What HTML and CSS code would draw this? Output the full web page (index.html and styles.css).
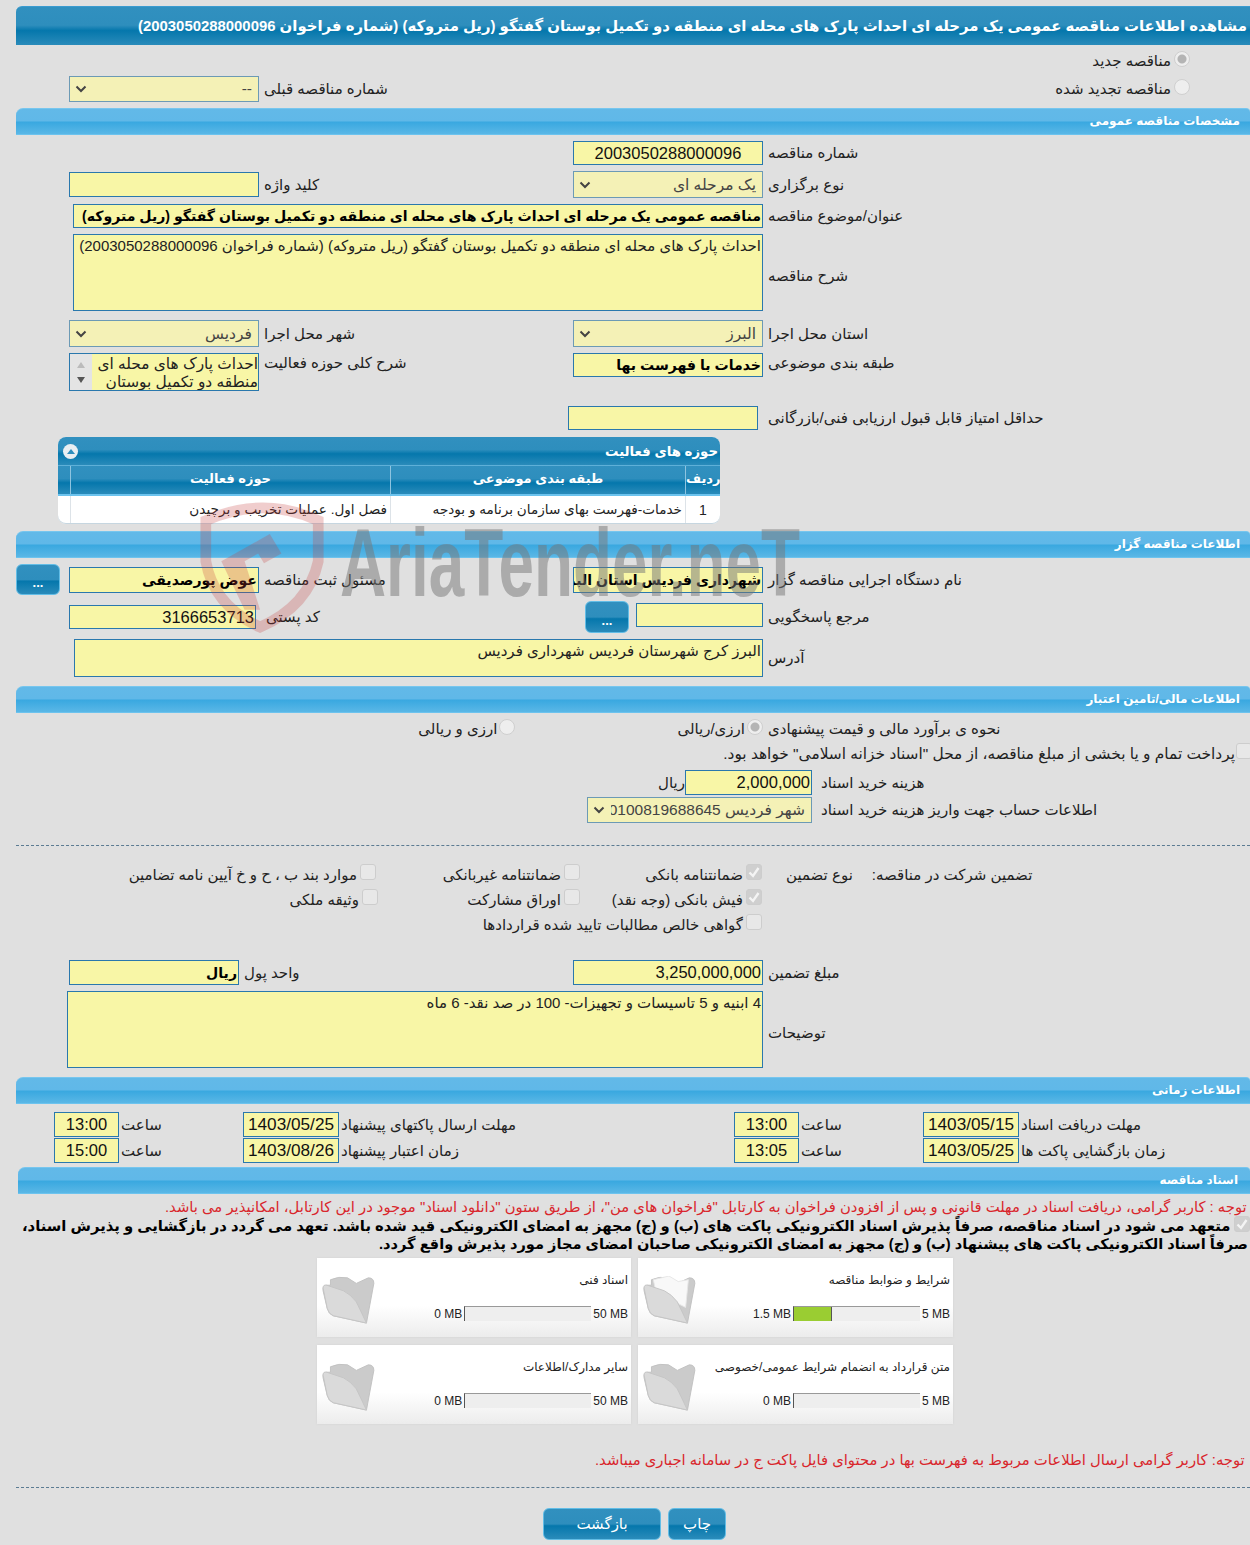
FILE: index.html
```html
<!DOCTYPE html>
<html lang="fa">
<head>
    <meta charset="UTF-8">
    <title>مشاهده اطلاعات مناقصه</title>
    <link rel="stylesheet" href="styles.css">
</head>
<body>
    <svg class="defs" width="0" height="0">
        <symbol id="folder" viewBox="0 0 56 52">
            <path d="M9 4 Q18 0 27.5 2 L37 8 L50 2 Q56 2 56 8 L48 51 L11.5 43 Q7 41 5.5 35 L1 16 Q0 10 5 10 L9 10 Z" fill="#cbcbcb" stroke="#c0c0c0"/>
            <path d="M1 13 Q1 9 5 10 L23 16 Q31 20 37 28 L48 51 L12 43 Q7 41 5.5 35 Z" fill="#dadada" stroke="#c4c4c4"/>
        </symbol>
        <symbol id="folder-full" viewBox="0 0 56 52">
            <path d="M9 4 Q18 0 27.5 2 L37 8 L50 2 Q56 2 56 8 L48 51 L11.5 43 Q7 41 5.5 35 L1 16 Q0 10 5 10 L9 10 Z" fill="#cbcbcb" stroke="#c0c0c0"/>
            <path d="M11 4 L28 0 L38 6 L49 4 L46 34 L14 18 Z" fill="#f8f8f8" stroke="#e6e6e6"/>
            <path d="M1 13 Q1 9 5 10 L23 16 Q31 20 37 28 L48 51 L12 43 Q7 41 5.5 35 Z" fill="#dadada" stroke="#c4c4c4"/>
        </symbol>
        <symbol id="chevron" viewBox="0 0 12 8">
            <path d="M1.5 1.5 L6 6 L10.5 1.5" fill="none" stroke="#444" stroke-width="2"/>
        </symbol>
        <symbol id="tick" viewBox="0 0 14 14">
            <path d="M2.5 7.5 L6 11 L11.5 3" fill="none" stroke="#f4f4f4" stroke-width="2.4"/>
        </symbol>
    </svg>

    <!-- watermark over the form -->
    <div class="watermark">
        <svg class="wm-shield" viewBox="0 0 130 140">
            <path d="M6 20 Q65 -6 122 20 L122 62 Q112 108 62 130 Q14 108 6 62 Z" fill="none" stroke="#c83c3c" stroke-width="11"/>
            <path d="M22 62 L72 34 L84 54 L66 64 L60 54 L46 62 L62 112 L46 112 Z" fill="#c83c3c"/>
        </svg>
        <span class="wm-text">AriaTender.neT</span>
    </div>

    <div class="title-bar"><h1>مشاهده اطلاعات مناقصه عمومی یک مرحله ای احداث پارک های محله ای منطقه دو تکمیل بوستان گفتگو (ریل متروکه) (شماره فراخوان 2003050288000096)</h1></div>

    <div class="row h26 mt3">
        <div class="radio-cell"><span class="radio on"></span><span>مناقصه جدید</span></div>
    </div>
    <div class="row h28 mt1">
        <div class="field select col2 h26"><svg class="chev"><use href="#chevron"/></svg><span>--</span></div>
        <label class="col3">شماره مناقصه قبلی</label>
        <div class="radio-cell"><span class="radio"></span><span>مناقصه تجدید شده</span></div>
    </div>

    <div class="band mt5">مشخصات مناقصه عمومی</div>

    <div class="row h24 mt6">
        <div class="field num col4 centered">2003050288000096</div>
        <label class="col5">شماره مناقصه</label>
    </div>
    <div class="row h27 mt6">
        <div class="field col2 h25">&nbsp;</div>
        <label class="col3">کلید واژه</label>
        <div class="field select col4"><svg class="chev"><use href="#chevron"/></svg><span>یک مرحله ای</span></div>
        <label class="col5">نوع برگزاری</label>
    </div>
    <div class="row h24 mt6">
        <div class="field strong wide">مناقصه عمومی یک مرحله ای احداث پارک های محله ای منطقه دو تکمیل بوستان گفتگو (ریل متروکه)</div>
        <label class="col5">عنوان/موضوع مناقصه</label>
    </div>
    <div class="row h77 mt6">
        <div class="field area wide">احداث پارک های محله ای منطقه دو تکمیل بوستان گفتگو (ریل متروکه) (شماره فراخوان 2003050288000096)</div>
        <label class="col5 low">شرح مناقصه</label>
    </div>
    <div class="row h27 mt9">
        <div class="field select col2"><svg class="chev"><use href="#chevron"/></svg><span>فردیس</span></div>
        <label class="col3">شهر محل اجرا</label>
        <div class="field select col4"><svg class="chev"><use href="#chevron"/></svg><span>البرز</span></div>
        <label class="col5">استان محل اجرا</label>
    </div>
    <div class="row h38 mt6">
        <div class="scope col2">
            <div class="scope-arrows"><span class="arrow-up"></span><span class="arrow-down"></span></div>
            <div class="scope-text">احداث پارک های محله ای<br>منطقه دو تکمیل بوستان</div>
        </div>
        <label class="col3 top">شرح کلی حوزه فعالیت</label>
        <div class="field strong col4 h24 top">خدمات با فهرست بها</div>
        <label class="col5 top">طبقه بندی موضوعی</label>
    </div>
    <div class="row h24 mt15">
        <div class="field score">&nbsp;</div>
        <label class="col5">حداقل امتیاز قابل قبول ارزیابی فنی/بازرگانی</label>
    </div>

    <div class="subtable mt7">
        <div class="sub-caption">
            <span class="collapse"><span class="arrow-white"></span></span>
            <span>حوزه های فعالیت</span>
        </div>
        <div class="sub-head">
            <div></div>
            <div>حوزه فعالیت</div>
            <div>طبقه بندی موضوعی</div>
            <div>ردیف</div>
        </div>
        <div class="sub-body">
            <div></div>
            <div class="cell-text">فصل اول. عملیات تخریب و برچیدن</div>
            <div class="cell-text">خدمات-فهرست بهای سازمان برنامه و بودجه</div>
            <div class="cell-num">1</div>
        </div>
    </div>

    <div class="band mt7">اطلاعات مناقصه گزار</div>

    <div class="row h31 mt6">
        <button class="btn dots">...</button>
        <div class="field strong col2 h26">عوض پورصدیقی</div>
        <label class="col3">مسئول ثبت مناقصه</label>
        <div class="field strong col4 h26">شهرداری فردیس استان البرز</div>
        <label class="col5">نام دستگاه اجرایی مناقصه گزار</label>
    </div>
    <div class="row h32 mt6">
        <div class="postal">
            <div class="field num h24">3166653713</div>
            <label>کد پستی</label>
        </div>
        <div class="ref-cell">
            <button class="btn dots">...</button>
            <div class="field h24">&nbsp;</div>
        </div>
        <label class="col5">مرجع پاسخگویی</label>
    </div>
    <div class="row h38 mt6">
        <div class="field area address">البرز کرج شهرستان فردیس شهرداری فردیس</div>
        <label class="col5">آدرس</label>
    </div>

    <div class="band mt9">اطلاعات مالی/تامین اعتبار</div>

    <div class="row h24 mt4">
        <div class="pay-options">
            <div class="opt"><span class="radio on"></span><span>ارزی/ریالی</span></div>
            <div class="opt"><span class="radio"></span><span>ارزی و ریالی</span></div>
        </div>
        <label class="col5">نحوه ی برآورد مالی و قیمت پیشنهادی</label>
    </div>
    <div class="treasury h24 mt1">
        <span class="check"></span>
        <span>پرداخت تمام و یا بخشی از مبلغ مناقصه، از محل "اسناد خزانه اسلامی" خواهد بود.</span>
    </div>
    <div class="row-fee h25 mt4">
        <div class="fee-cell">
            <span class="fee-unit">ریال</span>
            <div class="field num">2,000,000</div>
        </div>
        <label>هزینه خرید اسناد</label>
    </div>
    <div class="row-fee h26 mt2">
        <div class="field select account"><svg class="chev"><use href="#chevron"/></svg><span class="select-text">شهر فردیس 0100819688645</span></div>
        <label>اطلاعات حساب جهت واریز هزینه خرید اسناد</label>
    </div>

    <hr class="dash dash-first">

    <div class="guarantee">
        <div class="g-cell"><span class="check"></span><span>موارد بند ب ، ح و خ آیین نامه تضامین</span></div>
        <div class="g-cell"><span class="check"></span><span>ضمانتنامه غیربانکی</span></div>
        <div class="g-cell"><span class="check ticked"><svg><use href="#tick"/></svg></span><span>ضمانتنامه بانکی</span></div>
        <div class="g-title"><span class="g-type">نوع تضمین</span><span>تضمین شرکت در مناقصه:</span></div>

        <div class="g-cell"><span class="check"></span><span>وثیقه ملکی</span></div>
        <div class="g-cell"><span class="check"></span><span>اوراق مشارکت</span></div>
        <div class="g-cell"><span class="check ticked"><svg><use href="#tick"/></svg></span><span>فیش بانکی (وجه نقد)</span></div>
        <div></div>

        <div class="g-cell g-long"><span class="check"></span><span>گواهی خالص مطالبات تایید شده قراردادها</span></div>
    </div>

    <div class="row h25 amount-row">
        <div class="currency">
            <div class="field strong">ریال</div>
            <label>واحد پول</label>
        </div>
        <div class="field num col4">3,250,000,000</div>
        <label class="col5">مبلغ تضمین</label>
    </div>
    <div class="row h77 mt6">
        <div class="field area notes">4 ابنیه و 5 تاسیسات و تجهیزات- 100 در صد نقد- 6 ماه</div>
        <label class="col5 low">توضیحات</label>
    </div>

    <div class="band mt9 h26">اطلاعات زمانی</div>

    <div class="row-time mt8">
        <div class="field num centered">13:00</div><label>ساعت</label>
        <div class="field num centered date">1403/05/25</div><label>مهلت ارسال پاکتهای پیشنهاد</label>
        <div class="field num centered">13:00</div><label>ساعت</label>
        <div class="field num centered date">1403/05/15</div><label>مهلت دریافت اسناد</label>
    </div>
    <div class="row-time mt1">
        <div class="field num centered">15:00</div><label>ساعت</label>
        <div class="field num centered date">1403/08/26</div><label>زمان اعتبار پیشنهاد</label>
        <div class="field num centered">13:05</div><label>ساعت</label>
        <div class="field num centered date">1403/05/25</div><label>زمان بازگشایی پاکت ها</label>
    </div>

    <div class="band docs-band mt4">اسناد مناقصه</div>

    <p class="line red note-first">توجه : کاربر گرامی، دریافت اسناد در مهلت قانونی و پس از افزودن فراخوان به کارتابل "فراخوان های من"، از طریق ستون "دانلود اسناد" موجود در این کارتابل، امکانپذیر می باشد.</p>
    <p class="line bold commit-one"><span class="check ticked"><svg><use href="#tick"/></svg></span> متعهد می شود در اسناد مناقصه، صرفاً پذیرش اسناد الکترونیکی پاکت های (ب) و (ج) مجهز به امضای الکترونیکی قید شده باشد. تعهد می گردد در بازگشایی و پذیرش اسناد،</p>
    <p class="line bold commit-two">صرفاً اسناد الکترونیکی پاکت های پیشنهاد (ب) و (ج) مجهز به امضای الکترونیکی صاحبان امضای مجاز مورد پذیرش واقع گردد.</p>

    <div class="cards">
        <div class="card">
            <svg class="folder"><use href="#folder"/></svg>
            <div class="card-main">
                <div class="card-title">اسناد فنی</div>
                <div class="meter"><span>0 MB</span><div class="bar"></div><span>50 MB</span></div>
            </div>
        </div>
        <div class="card">
            <svg class="folder"><use href="#folder-full"/></svg>
            <div class="card-main">
                <div class="card-title">شرایط و ضوابط مناقصه</div>
                <div class="meter"><span>1.5 MB</span><div class="bar"><div class="bar-fill" style="width: 30%"></div></div><span>5 MB</span></div>
            </div>
        </div>
        <div class="card">
            <svg class="folder"><use href="#folder"/></svg>
            <div class="card-main">
                <div class="card-title">سایر مدارک/اطلاعات</div>
                <div class="meter"><span>0 MB</span><div class="bar"></div><span>50 MB</span></div>
            </div>
        </div>
        <div class="card">
            <svg class="folder"><use href="#folder"/></svg>
            <div class="card-main">
                <div class="card-title">متن قرارداد به انضمام شرایط عمومی/خصوصی</div>
                <div class="meter"><span>0 MB</span><div class="bar"></div><span>5 MB</span></div>
            </div>
        </div>
    </div>

    <p class="line red note-last">توجه: کاربر گرامی ارسال اطلاعات مربوط به فهرست بها در محتوای فایل پاکت ج در سامانه اجباری میباشد.</p>

    <hr class="dash dash-last">

    <div class="actions">
        <button class="btn back">بازگشت</button>
        <button class="btn print">چاپ</button>
    </div>
</body>
</html>
```

FILE: styles.css
```css
html, body {
    margin: 0;
    padding: 0;
    overflow-x: hidden;
}

body {
    width: 1250px;
    min-height: 1545px;
    position: relative;
    background-color: #e0e0e0;
    color: #222;
    font-family: "Liberation Sans", "DejaVu Sans", sans-serif;
    font-size: 15px;
}

.defs {
    position: absolute;
}

/* spacing helpers */
.mt1 { margin-top: 1px; }
.mt2 { margin-top: 2px; }
.mt3 { margin-top: 3px; }
.mt4 { margin-top: 4px; }
.mt5 { margin-top: 5px; }
.mt6 { margin-top: 6px; }
.mt7 { margin-top: 7px; }
.mt8 { margin-top: 8px; }
.mt9 { margin-top: 9px; }
.mt15 { margin-top: 15px; }
.h24 { height: 24px; }
.h25 { height: 25px; }
.h26 { height: 26px; }
.h27 { height: 27px; }
.h28 { height: 28px; }
.h31 { height: 31px; }
.h32 { height: 32px; }
.h38 { height: 38px; }
.h77 { height: 77px; }

/* header bars */
.title-bar {
    margin: 6px 0 0 16px;
    height: 39px;
    box-sizing: border-box;
    padding-left: 122px;
    display: flex;
    align-items: center;
    overflow: hidden;
    border-radius: 6px 0 0 0;
    border-top: 1px solid #3a9bd0;
    background: linear-gradient(#3190bf 0%, #2e8ebd 48%, #0577ac 62%, #2a8bba 100%);
    color: white;
}

.title-bar h1 {
    margin: 0;
    direction: rtl;
    white-space: nowrap;
    flex: none;
    font-size: 14.9px;
    font-weight: bold;
}

.band {
    margin-left: 16px;
    height: 27px;
    box-sizing: border-box;
    padding: 0 10px 0 0;
    direction: rtl;
    line-height: 25px;
    border-radius: 7px 4px 0 0;
    border-top: 1px solid #77c6ee;
    border-bottom: 1px solid #6cc3ee;
    background: linear-gradient(#62b9e8 0%, #60b8e8 48%, #39a8e0 52%, #5ab7e6 100%);
    color: white;
    font-size: 12px;
    font-weight: bold;
}

.docs-band {
    margin-left: 18px;
    padding-right: 12px;
}

/* form rows */
.row {
    display: grid;
    grid-template-columns: 69px 190px 314px 190px 1fr;
    align-items: center;
}

label {
    direction: rtl;
    text-align: left;
    white-space: nowrap;
    padding-left: 5px;
}

.col2 { grid-column: 2; grid-row: 1; }
.col3 { grid-column: 3; grid-row: 1; }
.col4 { grid-column: 4; grid-row: 1; }
.col5 { grid-column: 5; grid-row: 1; }
.wide { grid-column: 2 / 5; grid-row: 1; margin-left: 4px; }
.top { align-self: start; }
label.top { padding-top: 1px; }
label.low { padding-top: 6px; }

.field {
    box-sizing: border-box;
    height: 100%;
    padding: 0 1px;
    direction: rtl;
    text-align: right;
    white-space: nowrap;
    overflow: hidden;
    display: flex;
    align-items: center;
    background-color: #f8f6a6;
    border: 1px solid #2a78ad;
    color: #111;
    font-size: 15px;
}

.field.num {
    font-size: 16.5px;
    direction: ltr;
    justify-content: flex-end;
}

.field.centered {
    justify-content: center;
}

.field.date {
    font-size: 17.2px;
}

.field.strong {
    font-size: 14.1px;
    font-weight: bold;
    color: #000;
}

.field.select {
    position: relative;
    padding-right: 6px;
    background-color: #f4f1b6;
    border-color: #6c9ab5;
    color: #444;
    font-size: 15.5px;
}

.field.h24 { height: 24px; }
.field.h25 { height: 25px; }
.field.h26 { height: 26px; }

.chev {
    position: absolute;
    left: 5px;
    top: 50%;
    width: 12px;
    height: 8px;
    margin-top: -4px;
}

.field.area {
    align-items: flex-start;
    white-space: normal;
    padding-top: 2px;
    line-height: 17px;
    color: #222;
}

.address { grid-column: 2 / 5; grid-row: 1; margin-left: 5px; }
.notes { grid-column: 2 / 5; grid-row: 1; margin-left: -2px; }
.score { grid-column: 3 / 5; grid-row: 1; justify-self: end; width: 190px; margin-right: 5px; }

.radio-cell {
    grid-column: 5;
    grid-row: 1;
    direction: rtl;
    display: flex;
    align-items: center;
    gap: 3px;
    padding-right: 60px;
}

.radio {
    flex: none;
    width: 14px;
    height: 14px;
    margin-top: -4px;
    border-radius: 50%;
    border: 1px solid #cfcfcf;
    background-color: #eee;
}

.radio.on {
    background: radial-gradient(circle, #b4b4b4 0 4px, #eee 5px);
}

.check {
    flex: none;
    display: inline-block;
    width: 14px;
    height: 14px;
    margin-top: -6px;
    border-radius: 3px;
    border: 1px solid #cdcdcd;
    background-color: #e8e8e8;
}

.check.ticked {
    background-color: #cfcfcf;
}

.check svg {
    display: block;
    width: 14px;
    height: 14px;
}

/* activity scope box */
.scope {
    height: 38px;
    box-sizing: border-box;
    display: flex;
    background-color: #f8f6a6;
    border: 1px solid #2a78ad;
    overflow: hidden;
}

.scope-arrows {
    width: 22px;
    flex: none;
    background-color: #e4e4e4;
    display: flex;
    flex-direction: column;
    justify-content: space-around;
    align-items: center;
    padding: 3px 0;
    box-sizing: border-box;
}

.arrow-up {
    border: 4px solid transparent;
    border-top: 0;
    border-bottom: 6px solid #bbb;
}

.arrow-down {
    border: 4px solid transparent;
    border-bottom: 0;
    border-top: 6px solid #555;
}

.scope-text {
    flex: 1;
    direction: rtl;
    text-align: right;
    white-space: nowrap;
    overflow: hidden;
    padding-top: 1px;
    line-height: 18px;
    font-size: 15.4px;
}

/* activity table */
.subtable {
    margin-left: 58px;
    width: 662px;
    height: 87px;
    background-color: white;
    border-radius: 8px;
    overflow: hidden;
    box-shadow: inset 0 -1px 0 #c6d6e0;
}

.sub-caption {
    height: 28px;
    display: flex;
    justify-content: space-between;
    align-items: center;
    padding: 0 2px 0 5px;
    background: linear-gradient(#3190bf 0%, #2e8ebd 45%, #0577ac 60%, #2a8bba 100%);
    color: white;
    font-weight: bold;
    font-size: 13.3px;
}

.collapse {
    width: 15px;
    height: 15px;
    border-radius: 50%;
    background-color: #e8eef2;
    display: flex;
    align-items: center;
    justify-content: center;
}

.arrow-white {
    border: 4px solid transparent;
    border-top: 0;
    border-bottom: 5px solid #2e8ebd;
}

.sub-head, .sub-body {
    display: grid;
    grid-template-columns: 12px 320px 295px 1fr;
}

.sub-head {
    height: 29px;
    background: linear-gradient(#3190bf 0%, #2e8ebd 45%, #0577ac 60%, #2a8bba 100%);
    border-top: 1px solid #5eb0d8;
    box-sizing: border-box;
    color: white;
    font-weight: bold;
    font-size: 13px;
    text-align: center;
}

.sub-head div {
    border-left: 1px solid #8ec4e0;
    line-height: 25px;
    direction: rtl;
}

.sub-head div:first-child,
.sub-body div:first-child {
    border-left: 0;
}

.sub-body {
    height: 30px;
    border-top: 2px solid #6cc3ee;
    box-sizing: border-box;
    font-size: 13.6px;
}

.sub-body div {
    border-left: 1px solid #dde3e8;
    line-height: 28px;
    height: 27px;
}

.cell-text {
    direction: rtl;
    padding-right: 3px;
    white-space: nowrap;
    overflow: hidden;
}

.cell-num {
    text-align: center;
    font-size: 14px;
}

/* buttons */
.btn {
    box-sizing: border-box;
    padding: 0;
    border: 1px solid #62bde6;
    border-radius: 6px;
    background: linear-gradient(#3190bf 0%, #2e8ebd 50%, #0577ac 56%, #2a8bba 100%);
    color: white;
    font-family: inherit;
    font-size: 15px;
}

.dots {
    width: 44px;
    height: 31px;
    margin-left: 16px;
    padding-top: 6px;
    font-size: 13px;
    font-weight: bold;
    grid-column: 1;
    grid-row: 1;
    justify-self: start;
}

.postal {
    grid-column: 2 / 4;
    grid-row: 1;
    display: flex;
    align-items: center;
}

.postal .field {
    width: 187px;
    flex: none;
}

.postal label {
    padding-left: 10px;
}

.ref-cell {
    grid-column: 4;
    grid-row: 1;
    display: flex;
    align-items: flex-start;
    gap: 7px;
    height: 100%;
    padding-left: 12px;
}

.ref-cell .dots {
    margin: 0;
    height: 32px;
    flex: none;
}

.ref-cell .field {
    flex: 1;
    margin-top: 2px;
}

/* finance rows */
.pay-options {
    grid-column: 2 / 5;
    grid-row: 1;
    direction: rtl;
    display: flex;
    gap: 162px;
}

.opt {
    display: flex;
    align-items: center;
    gap: 2px;
}

.treasury {
    direction: rtl;
    display: flex;
    align-items: center;
    gap: 1px;
    margin-right: -2px;
    font-size: 15.4px;
}

.row-fee {
    display: grid;
    grid-template-columns: 587px 225px 1fr;
    align-items: center;
}

.row-fee label {
    grid-column: 3;
    padding-left: 9px;
}

.fee-cell {
    grid-column: 1 / 3;
    grid-row: 1;
    height: 100%;
    display: flex;
    justify-content: flex-end;
    align-items: center;
}

.fee-cell .field {
    width: 127px;
    flex: none;
}

.fee-unit {
    direction: rtl;
    padding-right: 0;
}

.account {
    grid-column: 2;
    grid-row: 1;
}

.select-text {
    flex: 1;
    margin-left: 22px;
    overflow: hidden;
}

.dash {
    border: 0;
    border-top: 1px dashed #5b7b92;
    margin: 0 0 0 16px;
}

.dash-first { margin-top: 22px; }
.dash-last { margin-top: 18px; }

/* guarantee checkboxes */
.guarantee {
    margin-top: 16px;
    display: grid;
    grid-template-columns: 378px 202px 182px 1fr;
    grid-auto-rows: 25px;
    align-items: center;
}

.g-cell {
    direction: rtl;
    display: flex;
    align-items: center;
    gap: 3px;
    white-space: nowrap;
}

.g-cell:nth-child(1) { padding-right: 2px; }
.g-long { grid-column: 1 / 4; }

.g-title {
    direction: rtl;
    display: flex;
    justify-content: flex-end;
    gap: 19px;
    padding-left: 24px;
    white-space: nowrap;
}

.g-type {
    order: 2;
}

.amount-row {
    margin-top: 23px;
}

.currency {
    grid-column: 2 / 4;
    grid-row: 1;
    height: 100%;
    display: flex;
    align-items: center;
}

.currency .field {
    width: 170px;
    flex: none;
}

/* dates */
.row-time {
    display: grid;
    grid-template-columns: 54px 65px 124px 96px 395px 65px 124px 96px 1fr;
    height: 25px;
    align-items: center;
}

.row-time .field:first-child { grid-column: 2; }
.row-time label { padding-left: 2px; }

/* long overflowing lines */
.line {
    margin: 0;
    height: 18px;
    line-height: 18px;
    width: max-content;
    direction: rtl;
    white-space: nowrap;
}

.red {
    color: #d9262c;
    font-size: 14.8px;
}

.bold {
    color: #000;
    font-weight: bold;
    font-size: 14.8px;
}

.note-first { margin: 4px 0 0 165px; }
.commit-one { margin: 1px 0 0 22px; }
.commit-two { margin: 0 0 0 379px; font-size: 14.6px; }
.note-last { margin: 27px 0 0 595px; }

.commit-one .check {
    vertical-align: middle;
}

/* upload cards */
.cards {
    margin: 5px 0 0 317px;
    width: 636px;
    display: grid;
    grid-template-columns: 314px 315px;
    grid-auto-rows: 79px;
    gap: 8px 7px;
}

.card {
    display: flex;
    gap: 4px;
    padding: 0 3px 0 4px;
    background: linear-gradient(white 0%, white 60%, #ececec 100%);
    box-shadow: 0 0 2px #cfcfcf;
}

.folder {
    flex: none;
    width: 54px;
    height: 48px;
    margin-top: 18px;
}

.card-main {
    flex: 1;
    padding-top: 15px;
}

.card-title {
    direction: rtl;
    font-size: 12px;
    white-space: nowrap;
    height: 20px;
}

.meter {
    margin-top: 13px;
    display: flex;
    align-items: center;
    justify-content: flex-end;
    gap: 2px;
    font-size: 12px;
    white-space: nowrap;
}

.bar {
    width: 126px;
    height: 14px;
    background-color: #eee;
    border-left: 1px solid #555;
    border-top: 1px solid #999;
    flex: none;
}

.bar-fill {
    height: 100%;
    background-color: #9acd32;
    border-right: 1px solid #555;
    box-sizing: border-box;
}

.actions {
    margin: 20px 0 0 543px;
    display: flex;
    gap: 7px;
}

.back { width: 118px; height: 32px; }
.print { width: 58px; height: 32px; }

/* watermark */
.watermark {
    position: absolute;
    left: 200px;
    top: 500px;
    width: 620px;
    height: 140px;
    opacity: 0.5;
    pointer-events: none;
    z-index: 5;
}

.wm-shield {
    position: absolute;
    left: 0;
    top: 0;
    width: 126px;
    height: 138px;
    opacity: 0.5;
}

.wm-text {
    position: absolute;
    left: 140px;
    top: 18px;
    transform: scaleX(0.665);
    transform-origin: left top;
    color: #777;
    font-size: 96px;
    font-weight: bold;
    white-space: nowrap;
    line-height: 90px;
}
```
